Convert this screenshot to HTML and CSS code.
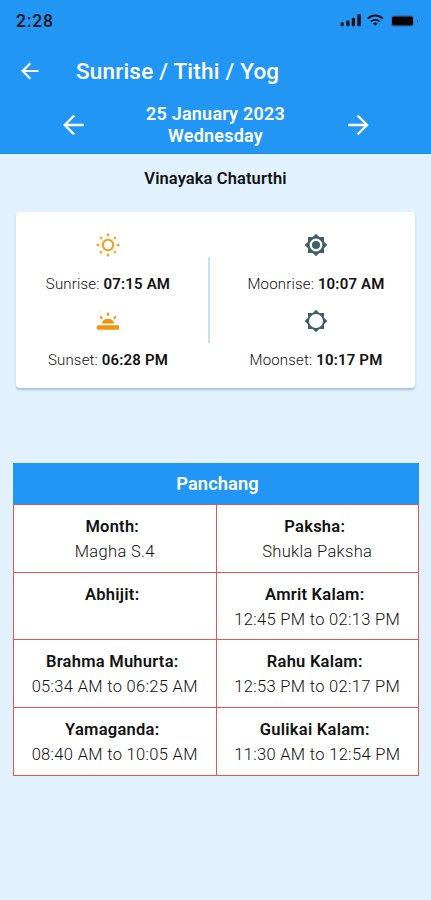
FILE: index.html
```html
<!DOCTYPE html>
<html lang="en">
  <head>
    <meta charset="UTF-8">
    <meta name="viewport" content="width=device-width, initial-scale=1">
    <title>Sunrise / Tithi / Yog</title>
    <link rel="stylesheet" href="styles.css">
  </head>
  <body>
    <header class="header">
      <div class="status-bar">
        <span class="clock">2:28</span>
        <svg class="status-icons" width="80" height="16" viewBox="0 0 80 16">
          <rect x="1.7" y="9.3" width="3" height="4" rx="1"/>
          <rect x="7.3" y="7.5" width="3.2" height="5.8" rx="1"/>
          <rect x="12.8" y="4.8" width="3.2" height="8.5" rx="1"/>
          <rect x="18.3" y="1.3" width="3.5" height="12" rx="1"/>
          <path d="M28.8 5.6a10.6 10.6 0 0 1 15 0M31.9 8.6a6.4 6.4 0 0 1 8.8 0" fill="none" stroke="#06131f" stroke-width="1.9"/>
          <path d="M36.3 12.8l-2.3-2.3a3.3 3.3 0 0 1 4.6 0z"/>
          <rect x="52.3" y="2.4" width="22" height="11" rx="2.5" fill="none" stroke="#3274c0" stroke-width="1"/>
          <rect x="53" y="3.4" width="21" height="9" rx="1.5" fill="#000"/>
          <path d="M78 6.6v2.6a1.5 1.5 0 0 0 0-2.6z"/>
        </svg>
      </div>
      <div class="app-bar">
        <svg class="back" width="24" height="24" viewBox="0 0 24 24">
          <path d="M20.5 12H5M12.3 4.3L4.6 12l7.7 7.7"/>
        </svg>
        <h1>Sunrise / Tithi / Yog</h1>
      </div>
      <div class="date-bar">
        <svg class="arrow" width="28" height="28" viewBox="0 0 28 28">
          <path d="M24.7 14H6.5M15.2 4.5L5.7 14l9.5 9.5"/>
        </svg>
        <div class="date">25 January 2023<br>Wednesday</div>
        <svg class="arrow" width="28" height="28" viewBox="0 0 28 28">
          <path d="M4.2 14h18.2M13.5 4.5l9.5 9.5-9.5 9.5"/>
        </svg>
      </div>
    </header>

    <h2 class="festival">Vinayaka Chaturthi</h2>

    <section class="card">
      <div class="card-col">
        <div class="timing">
          <svg class="sun" width="26" height="26" viewBox="0 0 26 26">
            <circle cx="13" cy="13" r="5.2" fill="none" stroke="#f5a01c" stroke-width="2"/>
            <path d="M13 1l1.6 1.8L13 5l-1.6-2.2zM13 21l1.6 2.2L13 25l-1.6-1.8zM1 13l1.8-1.6L5 13l-2.2 1.6zM21 13l2.2-1.6L25 13l-1.8 1.6z"/>
            <path d="M5.9 4.3l1.8 1.8-1.4 1.4-1.8-1.8zM20.1 4.3l1.4 1.4-1.8 1.8-1.4-1.4zM5.9 21.7l-1.4-1.4 1.8-1.8 1.4 1.4zM20.1 21.7l-1.8-1.8 1.4-1.4 1.8 1.8z"/>
          </svg>
          <p>Sunrise: <b>07:15 AM</b></p>
        </div>
        <div class="timing">
          <svg class="sunset" width="26" height="26" viewBox="0 0 26 26">
            <rect x="2" y="17.3" width="22" height="4.4" rx="1"/>
            <path d="M6.8 15.5a6.3 5.8 0 0 1 12.4 0z"/>
            <path d="M13 4l1.6 2.1L13 8.4l-1.6-2.3zM6 7.4l1.9 2.8-1.4 1.3-2-2.4zM20 7.4l1.5 1.7-2 2.4-1.4-1.3z"/>
          </svg>
          <p>Sunset: <b>06:28 PM</b></p>
        </div>
      </div>
      <div class="divider"></div>
      <div class="card-col moon-col">
        <div class="timing">
          <svg class="moon" width="24" height="26" viewBox="0 0 24 24">
            <path d="M20 15.31L23.31 12 20 8.69V4h-4.69L12 .69 8.69 4H4v4.69L.69 12 4 15.31V20h4.69L12 23.31 15.31 20H20v-4.69zM12 18.4a6.4 6.4 0 1 1 0-12.8 6.4 6.4 0 0 1 0 12.8z"/>
            <circle cx="12" cy="12" r="4"/>
          </svg>
          <p>Moonrise: <b>10:07 AM</b></p>
        </div>
        <div class="timing">
          <svg class="moon" width="24" height="26" viewBox="0 0 24 24">
            <path fill-rule="evenodd" d="M20 15.31L23.31 12 20 8.69V4h-4.69L12 .69 8.69 4H4v4.69L.69 12 4 15.31V20h4.69L12 23.31 15.31 20H20v-4.69zM12 19a7 7 0 1 0 0-14 7 7 0 0 0 0 14z"/>
          </svg>
          <p>Moonset: <b>10:17 PM</b></p>
        </div>
      </div>
    </section>

    <table class="panchang">
      <thead>
        <tr><th colspan="2">Panchang</th></tr>
      </thead>
      <tbody>
        <tr>
          <td><b>Month:</b><span>Magha S.4</span></td>
          <td><b>Paksha:</b><span>Shukla Paksha</span></td>
        </tr>
        <tr>
          <td><b>Abhijit:</b></td>
          <td><b>Amrit Kalam:</b><span>12:45 PM to 02:13 PM</span></td>
        </tr>
        <tr>
          <td><b>Brahma Muhurta:</b><span>05:34 AM to 06:25 AM</span></td>
          <td><b>Rahu Kalam:</b><span>12:53 PM to 02:17 PM</span></td>
        </tr>
        <tr>
          <td><b>Yamaganda:</b><span>08:40 AM to 10:05 AM</span></td>
          <td><b>Gulikai Kalam:</b><span>11:30 AM to 12:54 PM</span></td>
        </tr>
      </tbody>
    </table>
  </body>
</html>
```
FILE: styles.css
```css
* {
  box-sizing: border-box;
}
body {
  margin: 0;
  min-height: 900px;
  background-color: #e1f1fe;
  font-family: Roboto, sans-serif;
  color: #111;
}
svg {
  display: block;
}

/* Header */
.header {
  height: 154px;
  background-color: #2296f5;
  border-bottom: 1px solid #1c8ae0;
  color: white;
}
.status-bar {
  display: flex;
  justify-content: space-between;
  height: 42px;
  padding: 10px 12px 0 16px;
}
.clock {
  font-size: 17.5px;
  line-height: 22px;
  font-weight: 500;
  letter-spacing: 0.8px;
  color: #06131f;
}
.status-icons {
  margin-top: 3px;
  fill: #06131f;
}
.app-bar {
  display: flex;
  align-items: center;
  height: 58px;
  padding-left: 18px;
}
.back {
  fill: none;
  stroke: white;
  stroke-width: 2.2;
}
h1 {
  margin: 0 0 0 34px;
  font-size: 22.5px;
  font-weight: 500;
  letter-spacing: 0.2px;
}
.date-bar {
  display: flex;
  align-items: flex-start;
  justify-content: space-between;
  padding: 3px 59px 0;
}
.arrow {
  margin-top: 8px;
  fill: none;
  stroke: white;
  stroke-width: 2.4;
}
.date {
  font-size: 18px;
  line-height: 22px;
  font-weight: 600;
  letter-spacing: 0.22px;
  text-align: center;
}

.festival {
  margin: 15px 0 0;
  font-size: 16.5px;
  line-height: 20px;
  font-weight: 600;
  letter-spacing: 0.1px;
  text-align: center;
}

/* Sun and moon card */
.card {
  display: flex;
  align-items: center;
  height: 176px;
  margin: 23px 16px 0;
  background-color: white;
  border-radius: 4px;
  box-shadow: 0 2px 2px rgba(60, 80, 100, 0.3);
}
.card-col {
  width: 184px;
  height: 100%;
  padding-top: 20px;
}
.moon-col {
  width: 198px;
  margin-left: 7px;
}
.divider {
  width: 2px;
  height: 86px;
  margin-left: 8px;
  background-color: #c4e6e8;
}
.timing {
  display: flex;
  flex-direction: column;
  align-items: center;
  height: 76px;
}
.timing p {
  margin: 16px 0 0;
  font-size: 15px;
  line-height: 20px;
  font-weight: 300;
  letter-spacing: 0.18px;
}
.timing b {
  font-weight: 600;
}
.sun {
  fill: #f5a01c;
}
.sunset {
  fill: #f5930a;
}
.moon {
  fill: #3f5f68;
}

/* Panchang table */
.panchang {
  width: 406px;
  margin: 75px 0 0 13px;
  border-collapse: separate;
  border-spacing: 0;
  table-layout: fixed;
  text-align: center;
  border-right: 1px solid #e0574f;
  border-bottom: 1px solid #e0574f;
}
.panchang th {
  height: 41px;
  padding: 0 0 1px 4px;
  background-color: #2296f5;
  box-shadow: 1px 0 #2296f5;
  font-size: 18.3px;
  font-weight: 600;
  letter-spacing: 0.1px;
  color: white;
}
.panchang td {
  height: 67.7px;
  padding: 9px 0 0;
  background-color: white;
  border-top: 1px solid #e0574f;
  border-left: 1px solid #e0574f;
  font-size: 16.5px;
  line-height: 25px;
  vertical-align: top;
}
.panchang td b {
  display: block;
  padding-right: 5px;
  font-weight: 600;
  letter-spacing: 0.25px;
}
.panchang td span {
  display: block;
  font-weight: 300;
  letter-spacing: 0.32px;
}
```
